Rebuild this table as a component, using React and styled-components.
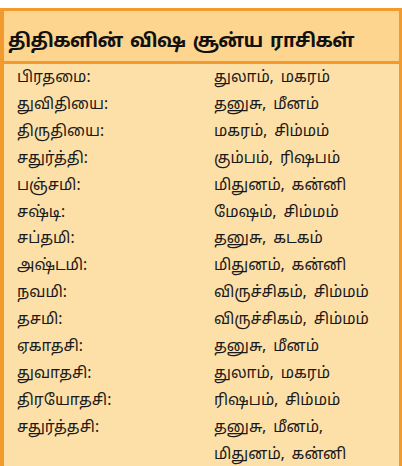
import { Fragment } from 'react';
import styled, { createGlobalStyle } from 'styled-components';

const GlobalStyle = createGlobalStyle`
  html, body {
    margin: 0;
    padding: 0;
    background: #ffffff;
  }
  body {
    font-family: "Noto Sans Tamil", "Noto Sans", "Liberation Sans", sans-serif;
  }
`;

const Page = styled.div`
  padding-top: 8px;
  width: 402px;
  height: 466px;
  box-sizing: border-box;
  overflow: hidden;
`;

const Card = styled.div`
  border: 3px solid #f39a2e;
  border-left-width: 4px;
  border-bottom: none;
  background: #fde0a8;
`;

const Header = styled.div`
  background: #fdd58e;
  border-bottom: 3px solid #f39a2e;
  height: 53px;
  display: flex;
  align-items: flex-end;
  padding: 0 0 9px 4px;
  box-sizing: border-box;
`;

const Title = styled.h1`
  margin: 0;
  font-size: 19px;
  font-weight: 700;
  color: #111;
  letter-spacing: -0.6px;
  word-spacing: 3px;
  line-height: 1;
  white-space: nowrap;
`;

const List = styled.div`
  display: grid;
  grid-template-columns: 197px 1fr;
  padding: 2px 0 0 13px;
`;

const Cell = styled.div`
  font-size: 15.5px;
  line-height: 26.9px;
  color: #1a1a1a;
  white-space: pre-line;
  word-spacing: 3px;
`;

const rows = [
  ['பிரதமை:', 'துலாம், மகரம்'],
  ['துவிதியை:', 'தனுசு, மீனம்'],
  ['திருதியை:', 'மகரம், சிம்மம்'],
  ['சதுர்த்தி:', 'கும்பம், ரிஷபம்'],
  ['பஞ்சமி:', 'மிதுனம், கன்னி'],
  ['சஷ்டி:', 'மேஷம், சிம்மம்'],
  ['சப்தமி:', 'தனுசு, கடகம்'],
  ['அஷ்டமி:', 'மிதுனம், கன்னி'],
  ['நவமி:', 'விருச்சிகம், சிம்மம்'],
  ['தசமி:', 'விருச்சிகம், சிம்மம்'],
  ['ஏகாதசி:', 'தனுசு, மீனம்'],
  ['துவாதசி:', 'துலாம், மகரம்'],
  ['திரயோதசி:', 'ரிஷபம், சிம்மம்'],
  ['சதுர்த்தசி:', 'தனுசு, மீனம்,\nமிதுனம், கன்னி'],
];

export default function App() {
  return (
    <Page>
      <GlobalStyle />
      <Card>
        <Header>
          <Title>திதிகளின் விஷ சூன்ய ராசிகள்</Title>
        </Header>
        <List>
          {rows.map(([tithi, rasi]) => (
            <Fragment key={tithi}>
              <Cell>{tithi}</Cell>
              <Cell>{rasi}</Cell>
            </Fragment>
          ))}
        </List>
      </Card>
    </Page>
  );
}
